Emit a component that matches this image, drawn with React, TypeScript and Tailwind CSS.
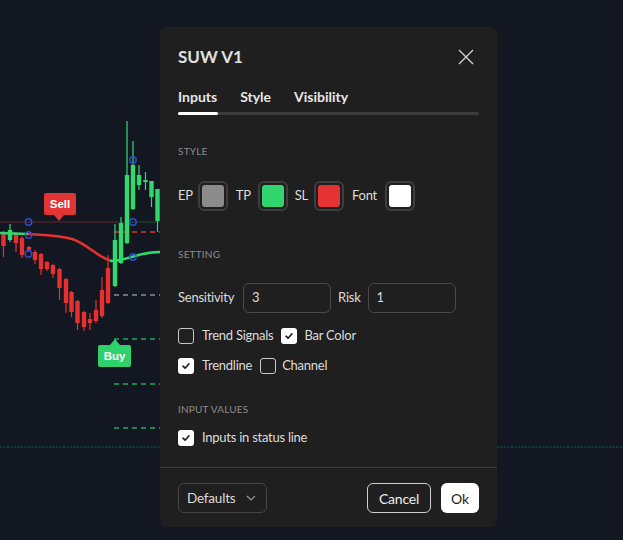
import React from "react";

type C = [number, number, number, number, number, "r" | "g"];
const candles: C[] = [
  [3.5, 233, 246, 231, 257, "r"],
  [10, 230, 240, 224, 242, "g"],
  [16, 233, 243, 232, 252, "r"],
  [22, 238, 255, 236, 258, "r"],
  [29, 247, 250, 246, 252, "r"],
  [35, 252, 260, 250, 264, "r"],
  [41, 254, 269, 253, 275, "r"],
  [47, 262, 269, 261, 271, "r"],
  [53, 265, 274, 264, 278, "r"],
  [59.5, 269, 288, 268, 300, "r"],
  [66, 279, 303, 278, 313, "r"],
  [71.5, 292, 312, 291, 317, "r"],
  [77.5, 301, 323, 300, 330, "r"],
  [84, 312, 327, 311, 331, "r"],
  [90, 319, 323, 313, 330, "r"],
  [96, 310, 321, 300, 323, "r"],
  [102, 290, 316, 277, 318, "r"],
  [108, 268, 303, 255, 304, "r"],
  [115, 240, 286, 224, 287, "g"],
  [121, 223, 263, 217, 264, "g"],
  [127, 175, 243, 121, 244, "g"],
  [133, 165, 209, 141, 210, "g"],
  [139, 175, 185, 165, 190, "g"],
  [145.5, 180, 182, 172, 190, "g"],
  [151.5, 181, 197, 181, 207, "g"],
  [157.5, 189, 221, 189, 232, "g"],
];

const RED = "#e8302f";
const GREEN = "#31d96c";

function Chart() {
  return (
    <svg className="absolute inset-0" width="623" height="540" viewBox="0 0 623 540">
      <line x1="0" y1="222" x2="120" y2="222" stroke="#4a2229" strokeWidth="1.5" />
      <line x1="120" y1="222" x2="160" y2="222" stroke="#1f3b2d" strokeWidth="1.5" />
      <line x1="114" y1="232" x2="160" y2="232" stroke="#e23232" strokeWidth="1.3" strokeDasharray="5 4" />
      <line x1="114" y1="295" x2="160" y2="295" stroke="#8a8d94" strokeWidth="1.3" strokeDasharray="5 4" />
      <line x1="114" y1="339" x2="160" y2="339" stroke="#27a85a" strokeWidth="1.3" strokeDasharray="5 4" />
      <line x1="114" y1="384" x2="160" y2="384" stroke="#27a85a" strokeWidth="1.3" strokeDasharray="5 4" />
      <line x1="114" y1="428" x2="160" y2="428" stroke="#27a85a" strokeWidth="1.3" strokeDasharray="5 4" />
      <line x1="0" y1="447" x2="623" y2="447" stroke="#11625c" strokeWidth="1" strokeDasharray="2 1.5" />
      {candles.map(([cx, bt, bb, wt, wb, c], i) => (
        <g key={i} fill={c === "r" ? RED : GREEN}>
          <rect x={cx - 0.6} y={wt} width="1.2" height={wb - wt} />
          <rect x={cx - 2.2} y={bt} width="4.4" height={Math.max(bb - bt, 2)} />
        </g>
      ))}
      <path d="M0 233 L28 234" stroke={GREEN} strokeWidth="2.6" fill="none" />
      <path d="M28 234 C45 235 58 235 72 239 C88 244 98 258 112 261" stroke={RED} strokeWidth="2.6" fill="none" />
      <path d="M110 261 C120 261 128 258 135 256 C145 253 152 252 160 252" stroke={GREEN} strokeWidth="2.6" fill="none" />
      {[
        [28.5, 222],
        [28.5, 235],
        [28.5, 254],
        [133, 160],
        [133, 222],
        [133, 257],
      ].map(([x, y], i) => (
        <circle key={i} cx={x} cy={y} r="3.2" fill="none" stroke="#2b4fd6" strokeWidth="1.4" />
      ))}
      <path d="M46 193 H74 Q76 193 76 195 V213 Q76 215 74 215 H64 L59 221 L54 215 H46 Q44 215 44 213 V195 Q44 193 46 193 Z" fill="#e23535" />
      <text x="60" y="208" textAnchor="middle" fill="#fff" fontSize="11.5" fontWeight="700" fontFamily="'Liberation Sans', Arial, sans-serif">Sell</text>
      <path d="M100 345 H110 L115 339 L120 345 H129 Q131 345 131 347 V365 Q131 367 129 367 H100 Q98 367 98 365 V347 Q98 345 100 345 Z" fill="#2ed16c" />
      <text x="114.5" y="360" textAnchor="middle" fill="#fff" fontSize="11.5" fontWeight="700" fontFamily="'Liberation Sans', Arial, sans-serif">Buy</text>
    </svg>
  );
}

function Check({ checked }: { checked: boolean }) {
  return checked ? (
    <span className="w-4 h-4 rounded-[3px] bg-white flex items-center justify-center shrink-0">
      <svg width="10" height="10" viewBox="0 0 10 10">
        <path d="M2 5.2 L4.1 7.2 L8 2.8" stroke="#1a1a1a" strokeWidth="1.6" fill="none" strokeLinecap="round" strokeLinejoin="round" />
      </svg>
    </span>
  ) : (
    <span className="w-4 h-4 rounded-[3px] border border-[#c8c8c8] shrink-0" />
  );
}

function Swatch({ color }: { color: string }) {
  return (
    <span className="w-[30px] h-[30px] rounded-[6px] border-2 border-[#3e3e3e] flex items-center justify-center shrink-0">
      <span className="w-[22px] h-[22px] rounded-[3px]" style={{ background: color }} />
    </span>
  );
}

function Label({ children }: { children: React.ReactNode }) {
  return <div className="text-[10px] leading-[14px] text-[#8c8c8c] tracking-[0.2px]">{children}</div>;
}

export default function App() {
  return (
    <div
      className="relative w-[623px] h-[540px] bg-[#131722] overflow-hidden text-[#dcdcdc]"
      style={{ fontFamily: "Lato, 'Noto Sans', sans-serif" }}
    >
      <Chart />
      <div className="absolute left-[160px] top-[27px] w-[337px] h-[500px] bg-[#1f1f1f] rounded-[6px] flex flex-col">
        <div className="px-[18px] pt-[18px] flex items-center justify-between h-[42px]">
          <div className="text-[17px] font-bold leading-[24px] text-[#e0e0e0]">SUW V1</div>
          <svg width="16" height="16" viewBox="0 0 16 16" className="mr-[5px]">
            <path d="M1 1 L15 15 M15 1 L1 15" stroke="#d0d0d0" strokeWidth="1.4" />
          </svg>
        </div>
        <div className="px-[18px] mt-[18px]">
          <div className="flex gap-[23px] text-[14px] font-bold leading-[20px] text-[#e6e6e6]">
            <span>Inputs</span>
            <span>Style</span>
            <span>Visibility</span>
          </div>
          <div className="mt-[5px] h-[3px] rounded-full bg-[#3c3c3c] flex">
            <div className="w-[40px] h-[3px] rounded-full bg-white" />
          </div>
        </div>
        <div className="px-[18px] mt-[29px] text-[13px] tracking-[-0.25px]">
          <Label>STYLE</Label>
          <div className="mt-[23px] flex items-center h-[30px]">
            <span className="mr-[5px]">EP</span>
            <Swatch color="#8c8c8c" />
            <span className="ml-[8px] mr-[7px]">TP</span>
            <Swatch color="#31d56e" />
            <span className="ml-[7px] mr-[6px]">SL</span>
            <Swatch color="#e53232" />
            <span className="ml-[8px] mr-[8px]">Font</span>
            <Swatch color="#ffffff" />
          </div>
          <div className="mt-[36px]">
            <Label>SETTING</Label>
          </div>
          <div className="mt-[22px] flex items-center h-[30px]">
            <span className="mr-[9px]">Sensitivity</span>
            <div className="w-[88px] h-[30px] rounded-[6px] border border-[#4a4a4a] flex items-center pl-[8px]">3</div>
            <span className="ml-[7px] mr-[7px]">Risk</span>
            <div className="w-[88px] h-[30px] rounded-[6px] border border-[#4a4a4a] flex items-center pl-[8px]">1</div>
          </div>
          <div className="mt-[13px] flex items-center h-[20px]">
            <Check checked={false} />
            <span className="ml-[8px] mr-[8px]">Trend Signals</span>
            <Check checked />
            <span className="ml-[7px]">Bar Color</span>
          </div>
          <div className="mt-[10px] flex items-center h-[20px]">
            <Check checked />
            <span className="ml-[8px] mr-[8px]">Trendline</span>
            <Check checked={false} />
            <span className="ml-[6px]">Channel</span>
          </div>
          <div className="mt-[26px]">
            <Label>INPUT VALUES</Label>
          </div>
          <div className="mt-[12px] flex items-center h-[20px]">
            <Check checked />
            <span className="ml-[8px]">Inputs in status line</span>
          </div>
        </div>
        <div className="mt-[19px] h-px bg-[#3a3a3a]" />
        <div className="px-[18px] mt-[15px] flex items-center h-[30px] text-[13.5px] tracking-[-0.2px]">
          <div className="w-[89px] h-[30px] rounded-[6px] border border-[#454545] flex items-center justify-between pl-[8px] pr-[10px]">
            <span>Defaults</span>
            <svg width="10" height="6" viewBox="0 0 10 6">
              <path d="M1 1 L5 5 L9 1" stroke="#9a9a9a" strokeWidth="1.2" fill="none" />
            </svg>
          </div>
          <div className="flex-1" />
          <div className="w-[64px] h-[30px] rounded-[6px] border border-[#cfcfcf] flex items-center justify-center text-[#eeeeee] text-[14px]">
            Cancel
          </div>
          <div className="ml-[10px] w-[38px] h-[30px] rounded-[6px] bg-white flex items-center justify-center text-[#222] text-[14px]">
            Ok
          </div>
        </div>
      </div>
    </div>
  );
}
